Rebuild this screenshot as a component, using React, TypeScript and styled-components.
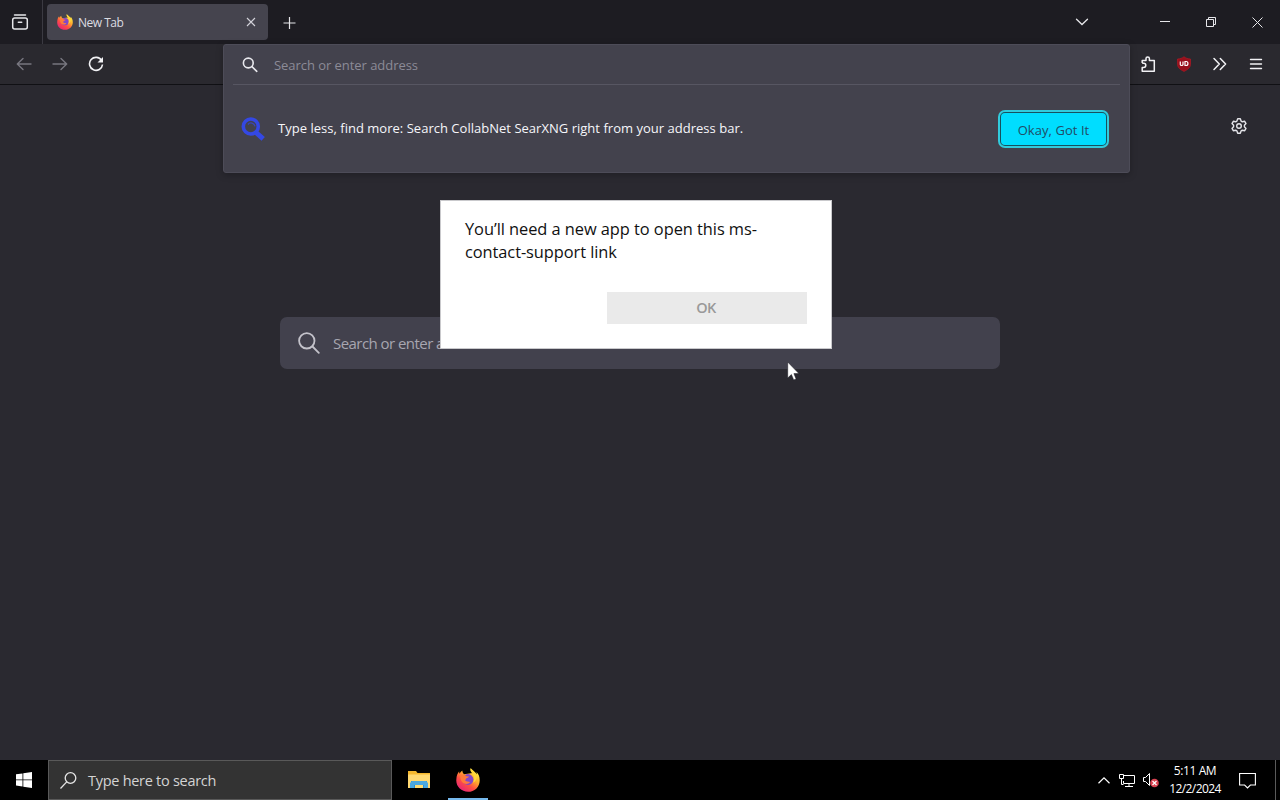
import styled, { createGlobalStyle } from "styled-components";

const GlobalStyle = createGlobalStyle`
  * {
    box-sizing: border-box;
  }
  body {
    margin: 0;
    overflow: hidden;
    background: #2b2a33;
    font-family: "Open Sans", "Noto Sans", sans-serif;
  }
  button {
    font-family: inherit;
    border: 0;
    padding: 0;
  }
  svg {
    display: block;
    flex-shrink: 0;
  }
`;
const Desktop = styled.div`
  position: relative;
  display: flex;
  flex-direction: column;
  width: 1280px;
  height: 800px;
  overflow: hidden;
`;
const TitleBar = styled.div`
  display: flex;
  align-items: center;
  height: 44px;
  background: #1d1c22;
  color: #e6e6ea;
`;
const ViewButton = styled.div`
  display: flex;
  align-items: center;
  width: 43px;
  height: 44px;
  padding-left: 11px;
  border-right: 1px solid #3b3a42;
`;
const Tab = styled.div`
  display: flex;
  align-items: center;
  width: 221px;
  height: 36px;
  margin-left: 4px;
  padding: 0 12px 0 10px;
  border-radius: 4px;
  background: #45444e;
`;
const Label = styled.span<{ $size: number; $spacing?: number }>`
  font-size: ${(props) => props.$size}px;
  letter-spacing: ${(props) => props.$spacing ?? 0}px;
  line-height: 18px;
  white-space: nowrap;
`;
const TabTitle = styled(Label)`
  flex: 1;
  margin-left: 5px;
  padding-top: 2px;
  color: #dcdce2;
`;
const NewTab = styled.div`
  flex: 1;
  padding: 1px 0 0 15px;
`;
const WindowButtons = styled.div`
  display: flex;
  align-items: center;
`;
const WindowButton = styled.div<{ $width: number }>`
  display: flex;
  justify-content: center;
  width: ${(props) => props.$width}px;
`;
const Toolbar = styled.div`
  display: flex;
  align-items: center;
  justify-content: space-between;
  height: 41px;
  padding: 0 16px;
  border-bottom: 1px solid #101014;
  background: #2a292f;
  color: #f2f2f5;
`;
const ToolGroup = styled.div<{ $gap: number }>`
  display: flex;
  align-items: center;
  gap: ${(props) => props.$gap}px;
`;
const Page = styled.main`
  position: relative;
  flex: 1;
  display: flex;
  flex-direction: column;
  align-items: center;
  background: #2a2930;
`;
const Settings = styled.div`
  display: flex;
  align-self: flex-end;
  margin: 33px 33px 0 0;
  color: #e4e4e9;
`;
const SearchBox = styled.div`
  display: flex;
  align-items: center;
  width: 720px;
  height: 52px;
  margin-top: 183px;
  padding-left: 18px;
  gap: 13px;
  border-radius: 7px;
  background: #42414d;
  color: #a7a6b0;
`;
const UrlPanel = styled.div`
  position: absolute;
  top: 44px;
  left: 223px;
  width: 907px;
  height: 129px;
  border: 1px solid #4d4c58;
  border-radius: 3px;
  background: #43424d;
  box-shadow: 0 2px 7px rgba(0, 0, 0, 0.25);
`;
const UrlInput = styled.div`
  display: flex;
  align-items: center;
  height: 40px;
  margin: 0 9px;
  padding-left: 9px;
  gap: 16px;
  border-bottom: 1px solid #575662;
  color: #8c8b97;
`;
const Tip = styled.div`
  display: flex;
  align-items: center;
  height: 87px;
  padding: 0 21px 0 17px;
`;
const TipText = styled(Label)`
  flex: 1;
  margin-left: 13px;
  padding-bottom: 2px;
  color: #f6f6fa;
`;
const TipButton = styled.button`
  width: 105px;
  height: 32px;
  margin-right: 2px;
  border-radius: 4px;
  background: #00ddff;
  outline: 2px solid #31cbdc;
  outline-offset: 1px;
  box-shadow: 0 0 0 1px #17505f;
  color: #204c66;
  padding-top: 3px;
`;
const Dialog = styled.div`
  position: absolute;
  top: 200px;
  left: 440px;
  display: flex;
  flex-direction: column;
  width: 392px;
  height: 149px;
  padding: 16px 24px 24px;
  border: 1px solid #c9c9cc;
  background: #fff;
`;
const DialogText = styled.p`
  margin: 0;
  font-size: 16.4px;
  line-height: 23px;
  color: #111;
`;
const DialogLine = styled.span<{ $spacing: number }>`
  display: block;
  white-space: nowrap;
  letter-spacing: ${(props) => props.$spacing}px;
`;
const OkButton = styled.button`
  align-self: flex-end;
  width: 200px;
  height: 32px;
  margin-top: auto;
  padding: 0 2px 0 0;
  background: #eaeaea;
  color: #999;
  font-weight: 600;
`;
const Cursor = styled.svg`
  position: absolute;
  top: 361px;
  left: 787px;
`;
const Taskbar = styled.footer`
  display: flex;
  align-items: center;
  height: 40px;
  background: #000;
  color: #fff;
`;
const Start = styled.div`
  display: flex;
  justify-content: center;
  width: 48px;
`;
const TaskSearch = styled.div`
  display: flex;
  align-items: center;
  width: 344px;
  height: 40px;
  padding: 1px 0 0 11px;
  gap: 10px;
  border: 1px solid #595959;
  background: #333;
  color: #d4d4d4;
`;
const TaskButton = styled.div<{ $active?: boolean }>`
  display: flex;
  align-items: center;
  justify-content: center;
  width: 40px;
  height: 40px;
  margin-left: ${(props) => (props.$active ? 9 : 7)}px;
  padding-top: 1px;
  border-bottom: 2px solid ${(props) => (props.$active ? "#76b9ed" : "transparent")};
`;
const Tray = styled.div`
  display: flex;
  align-items: center;
  height: 40px;
  margin-left: auto;
`;
const Clock = styled.div`
  display: flex;
  flex-direction: column;
  align-items: center;
  width: 70px;
  margin: 0 9px 0 0;
`;
const ShowDesktop = styled.div`
  width: 5px;
  height: 40px;
  margin-left: 19px;
  border-left: 1px solid #5a5a5a;
`;

function FirefoxLogo({ size, id }: { size: number; id: string }) {
  return (
    <svg width={size} height={size} viewBox="0 0 24 24">
      <defs>
        <linearGradient id={id} x1="0.85" y1="0.05" x2="0.2" y2="0.95">
          <stop offset="0.05" stopColor="#fff044" />
          <stop offset="0.38" stopColor="#ffab2e" />
          <stop offset="0.66" stopColor="#ff4f43" />
          <stop offset="1" stopColor="#e62378" />
        </linearGradient>
      </defs>
      <path
        d="M14.700.2c-.8 2 .1 3.700 2 4.900L7.900 6.200C6.700 5 6.200 3.700 6.400 2.500 5 3.300 4.200 4.500 3.700 5.700c-.5-.6-.6-1.600-.5-2.400C1.400 5.300.5 8 .4 11c-1 7 4.600 12.800 11.600 12.800 6.600 0 11.800-5 11.700-11.600 0-3.600-1.300-6.600-3.300-8.100.3.900.4 1.700.4 2.400C19.500 3.700 16.800 2.500 14.700.2z"
        fill={`url(#${id})`}
      />
      <circle cx="12" cy="11.500" r="5.400" fill="#8347c9" />
      <path d="M4.500 7.300c2.200-.8 4.300-.5 5.800.9l2.700.4c-.2 1.200-2.200 1.400-2.800 2-.5.500-.3 1.200-1 1.800 1.400 1.500 3.300.800 5 1.600-1.700 2.600-6.500 2.700-8.500-.5-1.200-2-1.600-4.200-1.200-6.200z" fill="#ff7a3a" />
      <path d="M14.700.2c-.8 3.600 2.600 5 3.300 8.500.5 2.500-.3 5-1.500 6.400 3.900-1.400 5.300-6.600 3.500-9.300-1-1.700-3.900-2.800-5.300-5.600z" fill="#ffd83b" />
    </svg>
  );
}

function App() {
  return (
    <Desktop>
      <GlobalStyle />
      <TitleBar>
        <ViewButton>
          <svg width="18" height="18" viewBox="0 0 18 18" fill="none" stroke="currentColor" strokeWidth="1.500" strokeLinecap="round">
            <path d="M3.500 2h11" />
            <rect x="1.700" y="5" width="14.600" height="11" rx="2" />
            <path d="M7.300 9.300h3.400" />
          </svg>
        </ViewButton>
        <Tab>
          <FirefoxLogo size={16} id="tab-fox" />
          <TabTitle $size={12} $spacing={-0.5}>New Tab</TabTitle>
          <svg width="10" height="10" viewBox="0 0 10 10" stroke="#d3d3da" strokeWidth="1.100">
            <path d="M1 1l8 8M9 1l-8 8" />
          </svg>
        </Tab>
        <NewTab>
          <svg width="14" height="14" viewBox="0 0 14 14" stroke="currentColor" strokeWidth="1.200">
            <path d="M6.500 1v12M.5 7h12" />
          </svg>
        </NewTab>
        <WindowButtons>
          <WindowButton $width={120}>
            <svg width="14" height="8" viewBox="0 0 14 8" fill="none" stroke="currentColor" strokeWidth="1.300" strokeLinecap="round">
              <path d="M1.500 1.200L7 6.500l5.500-5.300" />
            </svg>
          </WindowButton>
          <WindowButton $width={46}>
            <svg width="10" height="10" viewBox="0 0 10 10" stroke="currentColor">
              <path d="M0 4.500h10" />
            </svg>
          </WindowButton>
          <WindowButton $width={46}>
            <svg width="10" height="10" viewBox="0 0 10 10" fill="none" stroke="currentColor">
              <path d="M.5 2.500h7v7h-7zM2.500 2.500v-2h7v7h-2" />
            </svg>
          </WindowButton>
          <WindowButton $width={46}>
            <svg width="11" height="11" viewBox="0 0 11 11" stroke="currentColor">
              <path d="M.5.5l10 10M10.500.5l-10 10" />
            </svg>
          </WindowButton>
        </WindowButtons>
      </TitleBar>
      <Toolbar>
        <ToolGroup $gap={20}>
          <svg width="16" height="16" viewBox="0 0 16 16" fill="none" stroke="#77767f" strokeWidth="1.400" strokeLinecap="round" strokeLinejoin="round">
            <path d="M15 8H1.500M7 2.500L1.300 8 7 13.500" />
          </svg>
          <svg width="16" height="16" viewBox="0 0 16 16" fill="none" stroke="#77767f" strokeWidth="1.400" strokeLinecap="round" strokeLinejoin="round">
            <path d="M1 8h13.500M9 2.500L14.700 8 9 13.500" />
          </svg>
          <svg width="16" height="16" viewBox="0 0 16 16" fill="none" stroke="currentColor" strokeWidth="1.600">
            <path d="M13.600 4.500A6.500 6.500 0 1 0 14.500 8.500" />
            <path d="M15 1v5.500H9.500z" fill="currentColor" stroke="none" />
          </svg>
        </ToolGroup>
        <ToolGroup $gap={20}>
          <svg width="16" height="16" viewBox="0 0 16 16" fill="none" stroke="currentColor" strokeWidth="1.500" strokeLinejoin="round">
            <path d="M2.200 7V4.500H6V2.600a1.700 1.700 0 0 1 3.400 0v1.900h4.900v10.700H2.200v-3.800h1.500a2.100 2.100 0 0 0 0-4.200H2.200" />
          </svg>
          <svg width="16" height="16" viewBox="0 0 16 16">
            <path d="M8 .7c2 1.600 3.800 2.100 6.500 2.300v5.300c0 3.400-3 5.500-6.500 7.100-3.500-1.600-6.500-3.700-6.500-7.100V3C4.200 2.800 6 2.300 8 .7z" fill="#98101c" stroke="#c01824" strokeWidth=".6" />
            <path d="M4.300 5.500v3c0 1.300 2.700 1.300 2.700 0v-3M9 5.500v4h1.200c2.300 0 2.300-4 0-4z" fill="none" stroke="#fff" strokeWidth="1.200" />
          </svg>
          <svg width="16" height="16" viewBox="0 0 16 16" fill="none" stroke="currentColor" strokeWidth="1.500" strokeLinecap="round" strokeLinejoin="round">
            <path d="M2 2.500L7.300 8 2 13.500M8.300 2.500L13.600 8l-5.300 5.500" />
          </svg>
          <svg width="16" height="16" viewBox="0 0 16 16" stroke="currentColor" strokeWidth="1.400" strokeLinecap="round">
            <path d="M2.500 3.500h11M2.500 8h11M2.500 12.500h11" />
          </svg>
        </ToolGroup>
      </Toolbar>
      <Page>
        <Settings>
          <svg width="16" height="16" viewBox="0 0 16 16" fill="none" stroke="currentColor" strokeWidth="1.400" strokeLinejoin="round">
            <path d="M6.700.8h2.600l.8 2.300 1.200.7 2.400-.5 1.300 2.300L13.400 7.300v1.400l1.600 1.700-1.300 2.300-2.400-.5-1.200.7-.8 2.300H6.700l-.8-2.300-1.200-.7-2.400.5L1 10.400l1.600-1.700V7.300L1 5.600l1.300-2.300 2.400.5 1.200-.7z" />
            <circle cx="8" cy="8" r="2.300" />
          </svg>
        </Settings>
        <SearchBox>
          <svg width="22" height="22" viewBox="0 0 22 22" fill="none" stroke="#c3c2ca" strokeWidth="1.800" strokeLinecap="round">
            <circle cx="8.800" cy="8.800" r="7.700" />
            <path d="M14.500 14.500l6.300 6.300" />
          </svg>
          <Label $size={15} $spacing={-0.55}>Search or enter address</Label>
        </SearchBox>
      </Page>
      <UrlPanel>
        <UrlInput>
          <svg width="16" height="16" viewBox="0 0 16 16" fill="none" stroke="#e9e9ee" strokeWidth="1.600" strokeLinecap="round">
            <circle cx="6.300" cy="6" r="4.900" />
            <path d="M10 9.700l4.800 4.600" />
          </svg>
          <Label $size={13} $spacing={-0.05}>Search or enter address</Label>
        </UrlInput>
        <Tip>
          <svg width="24" height="24" viewBox="0 0 24 24" fill="none" stroke="#3448e4">
            <circle cx="9.800" cy="9.500" r="7.500" strokeWidth="3.600" />
            <path d="M7 7.500c2-2.700 6.300-1.600 7 1.800" strokeWidth="1.300" opacity=".7" />
            <path d="M14.500 15l7.700 6.800" strokeWidth="5" />
          </svg>
          <TipText $size={13} $spacing={0.02}>
            Type less, find more: Search CollabNet SearXNG right from your address bar.
          </TipText>
          <TipButton>
            <Label $size={13} $spacing={0.05}>Okay, Got It</Label>
          </TipButton>
        </Tip>
      </UrlPanel>
      <Dialog>
        <DialogText>
          <DialogLine $spacing={-0.05}>You’ll need a new app to open this ms-</DialogLine>
          <DialogLine $spacing={-0.07}>contact-support link</DialogLine>
        </DialogText>
        <OkButton>
          <Label $size={14.500} $spacing={-0.5}>OK</Label>
        </OkButton>
      </Dialog>
      <Cursor width="13" height="20" viewBox="0 0 13 20">
        <path d="M.7 1v16l3.700-3.500 2.300 5.400 2.400-1-2.200-5.300h5z" fill="#fff" stroke="#15151c" strokeWidth=".5" />
      </Cursor>
      <Taskbar>
        <Start>
          <svg width="16" height="16" viewBox="0 0 16 16" fill="#fff">
            <path d="M0 2.300l6.500-.9v6.100H0zM7.300 1.300L16 0v7.500H7.300zM0 8.300h6.500v6.200L0 13.600zM7.300 8.300H16V16l-8.700-1.300z" />
          </svg>
        </Start>
        <TaskSearch>
          <svg width="18" height="18" viewBox="0 0 18 18" fill="none" stroke="#e5e5e5" strokeWidth="1.300">
            <circle cx="10.500" cy="6" r="5.300" />
            <path d="M6.700 9.900L.5 16.500" />
          </svg>
          <Label $size={14.5} $spacing={-0.28}>Type here to search</Label>
        </TaskSearch>
        <TaskButton>
          <svg width="22" height="20" viewBox="0 0 22 20">
            <path d="M0 1h8l1.500 2H22v15H0z" fill="#f5b82e" />
            <path d="M0 4.500h22V18H0z" fill="#ffd972" />
            <path d="M3 11h16v7H3z" fill="#278ed6" />
            <path d="M2 18v-5l2-2h14l2 2v5h-4v-3H6v3z" fill="#4aa8e0" />
            <path d="M7 15h8v3H7z" fill="#ffdc72" />
          </svg>
        </TaskButton>
        <TaskButton $active>
          <FirefoxLogo size={24} id="task-fox" />
        </TaskButton>
        <Tray>
          <svg width="12" height="7" viewBox="0 0 12 7" fill="none" stroke="#fff" strokeWidth="1.200">
            <path d="M.5 6.300L6 .9l5.500 5.400" />
          </svg>
          <svg width="26" height="16" viewBox="0 0 26 16" fill="none" stroke="#fff">
            <path d="M14 3.500h10.500v8H13.500V9M19 11.500v3M15 14.500h8M9.500 2.500h4v4h-4zM11.500 6.500v6h2" />
          </svg>
          <svg width="24" height="16" viewBox="0 0 24 16">
            <path d="M7.500 5.500h2l4-4v12l-4-4h-2z" fill="none" stroke="#fff" />
            <circle cx="18.500" cy="11" r="4.300" fill="#d84250" />
            <path d="M16.500 9l4 4M20.500 9l-4 4" stroke="#fff" strokeWidth="1.200" />
          </svg>
          <Clock>
            <Label $size={12} $spacing={-0.4}>5:11 AM</Label>
            <Label $size={12} $spacing={-0.6}>12/2/2024</Label>
          </Clock>
          <svg width="17" height="17" viewBox="0 0 17 17" fill="none" stroke="#fff" strokeWidth="1.100">
            <path d="M.6 1.500h15.800v11.500h-5l-2.900 3-2.900-3h-5z" />
          </svg>
          <ShowDesktop />
        </Tray>
      </Taskbar>
    </Desktop>
  );
}

export default App;
